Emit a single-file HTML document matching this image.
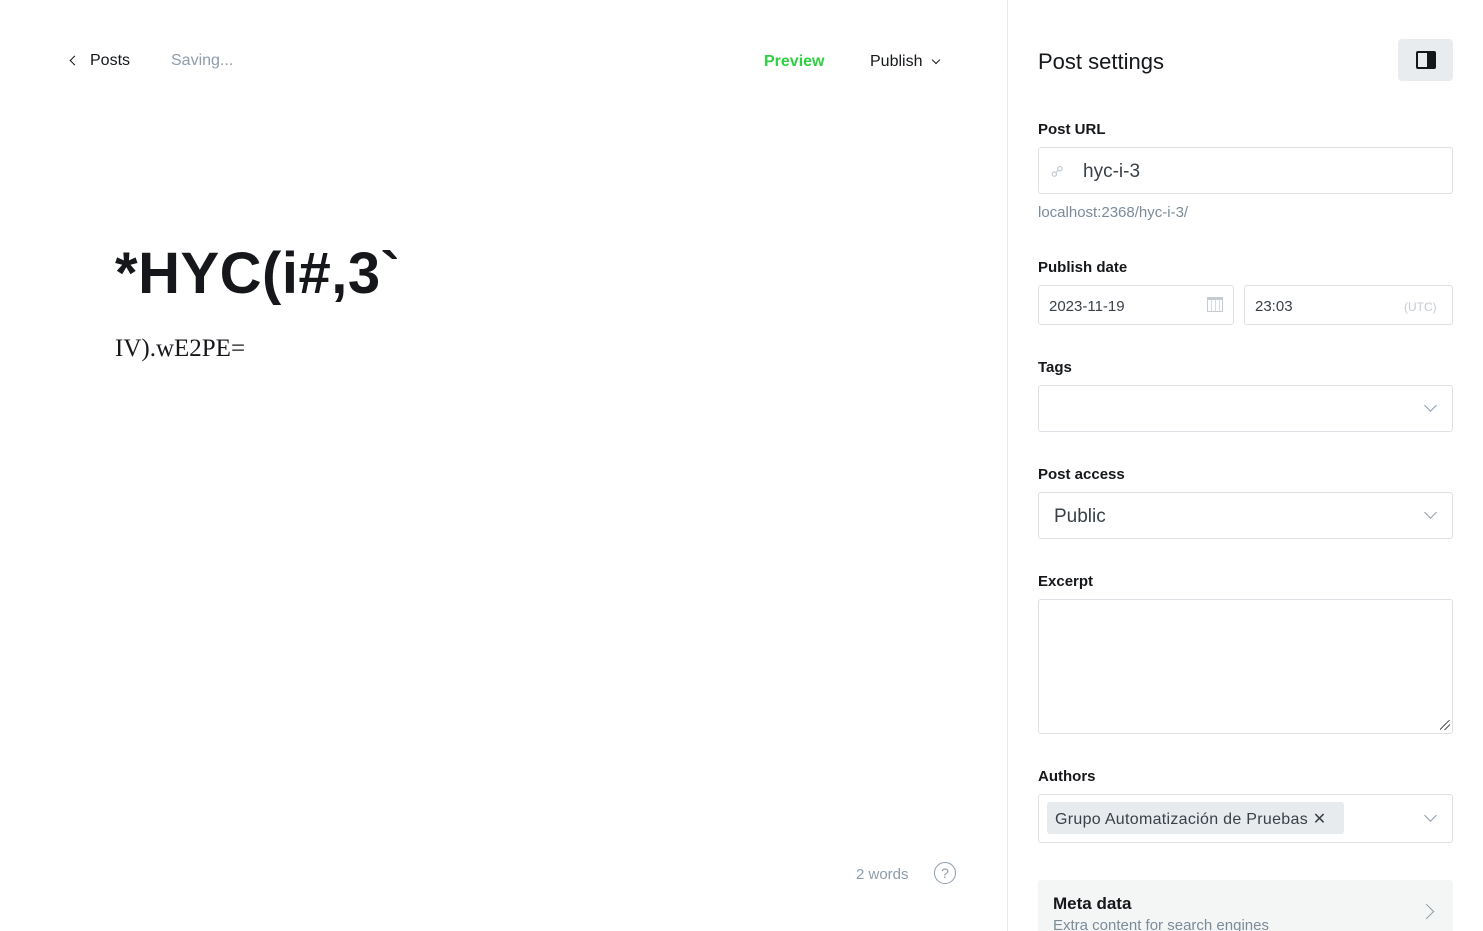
<!DOCTYPE html>
<html><head><meta charset="utf-8"><style>
*{box-sizing:border-box;margin:0;padding:0}
html,body{width:1483px;height:931px;overflow:hidden}
body{background:#fff;font-family:"Liberation Sans",sans-serif;color:#15171a;position:relative}
.a{position:absolute}
.lbl{position:absolute;left:1038px;font-size:15px;font-weight:600;color:#15171a}
.box{position:absolute;border:1px solid #dde1e5;border-radius:3px;background:#fff}
.chev{position:absolute;width:9px;height:9px;border-right:1.3px solid #8e9cac;border-bottom:1.3px solid #8e9cac;transform:rotate(45deg)}
</style></head><body>
<div class="a" style="left:1007px;top:0;width:1px;height:931px;background:#e6e9eb"></div>

<div class="a" style="left:71px;top:57px;width:7px;height:7px;border-left:1.5px solid #15171a;border-bottom:1.5px solid #15171a;transform:rotate(45deg)"></div>
<div class="a" style="left:90px;top:52px;font-size:16px;color:#15171a">Posts</div>
<div class="a" style="left:171px;top:52px;font-size:16px;color:#8e9cac">Saving...</div>
<div class="a" style="left:764px;top:53px;font-size:16px;font-weight:600;color:#30cf43">Preview</div>
<div class="a" style="left:870px;top:53px;font-size:16px;color:#15171a">Publish</div>
<div class="a" style="left:933px;top:57px;width:6px;height:6px;border-right:1.5px solid #15171a;border-bottom:1.5px solid #15171a;transform:rotate(45deg)"></div>

<div class="a" style="left:115px;top:240px;font-size:58px;font-weight:700;color:#15171a;letter-spacing:0.5px">*HYC(i#,3`</div>
<div class="a" style="left:115px;top:335px;font-size:25px;font-family:'Liberation Serif',serif;color:#15171a">IV).wE2PE=</div>

<div class="a" style="left:856px;top:866px;font-size:15px;color:#8e9cac">2 words</div>
<div class="a" style="left:934px;top:862px;width:22px;height:22px;border:1.3px solid #8e9cac;border-radius:50%;font-size:14px;color:#8e9cac;text-align:center;line-height:20px">?</div>

<div class="a" style="left:1038px;top:49px;font-size:22px;font-weight:500;color:#15171a">Post settings</div>
<div class="a" style="left:1398px;top:39px;width:55px;height:42px;background:#e9ecef;border-radius:4px"></div>
<div class="a" style="left:1416px;top:51px;width:20px;height:18px;border:2px solid #15171a;border-radius:2px"><div style="position:absolute;right:0;top:0;width:7px;height:14px;background:#15171a"></div></div>

<div class="lbl" style="top:121px">Post URL</div>
<div class="box" style="left:1038px;top:147px;width:415px;height:47px"></div>
<div class="a" style="left:1051px;top:162px;font-size:16px;color:#c5cbd2;transform:rotate(-45deg)">⚯</div>
<div class="a" style="left:1083px;top:161px;font-size:19px;color:#394047">hyc-i-3</div>
<div class="a" style="left:1038px;top:204px;font-size:15px;color:#7c8b9a">localhost:2368/hyc-i-3/</div>

<div class="lbl" style="top:259px">Publish date</div>
<div class="box" style="left:1038px;top:285px;width:196px;height:40px"></div>
<div class="a" style="left:1049px;top:298px;font-size:15px;color:#394047">2023-11-19</div>
<div class="a" style="left:1207px;top:297px;width:16px;height:15px;border:1px solid #c5cbd2;border-top-width:3px;background:repeating-linear-gradient(90deg,#fff 0 3px,#d5dae0 3px 4px)"></div>
<div class="box" style="left:1244px;top:285px;width:209px;height:40px"></div>
<div class="a" style="left:1255px;top:298px;font-size:15px;color:#394047">23:03</div>
<div class="a" style="left:1404px;top:300px;font-size:12px;color:#c5cbd2">(UTC)</div>

<div class="lbl" style="top:359px">Tags</div>
<div class="box" style="left:1038px;top:385px;width:415px;height:47px"></div>
<div class="chev" style="left:1426px;top:401px"></div>

<div class="lbl" style="top:466px">Post access</div>
<div class="box" style="left:1038px;top:492px;width:415px;height:47px"></div>
<div class="a" style="left:1054px;top:506px;font-size:19px;color:#394047">Public</div>
<div class="chev" style="left:1426px;top:508px"></div>

<div class="lbl" style="top:573px">Excerpt</div>
<div class="box" style="left:1038px;top:599px;width:415px;height:135px"></div>
<div class="a" style="left:1440px;top:720px;width:10px;height:10px;background:linear-gradient(135deg,transparent 45%,#555 45% 52%,transparent 52% 70%,#555 70% 77%,transparent 77%)"></div>

<div class="lbl" style="top:768px">Authors</div>
<div class="box" style="left:1038px;top:794px;width:415px;height:49px"></div>
<div class="a" style="left:1047px;top:802px;width:297px;height:32px;background:#e8ebee;border-radius:3px"></div>
<div class="a" style="left:1055px;top:809px;font-size:16px;font-weight:500;color:#394047;letter-spacing:0.3px">Grupo Automatización de Pruebas ✕</div>
<div class="chev" style="left:1426px;top:811px"></div>

<div class="a" style="left:1038px;top:880px;width:415px;height:51px;background:#f4f5f5;border-radius:3px 3px 0 0"></div>
<div class="a" style="left:1053px;top:894px;font-size:17px;font-weight:600;color:#15171a">Meta data</div>
<div class="a" style="left:1053px;top:917px;font-size:15px;color:#7c8b9a">Extra content for search engines</div>
<div class="a" style="left:1421px;top:906px;width:11px;height:11px;border-right:1.5px solid #8e9cac;border-top:1.5px solid #8e9cac;transform:rotate(45deg)"></div>
</body></html>
